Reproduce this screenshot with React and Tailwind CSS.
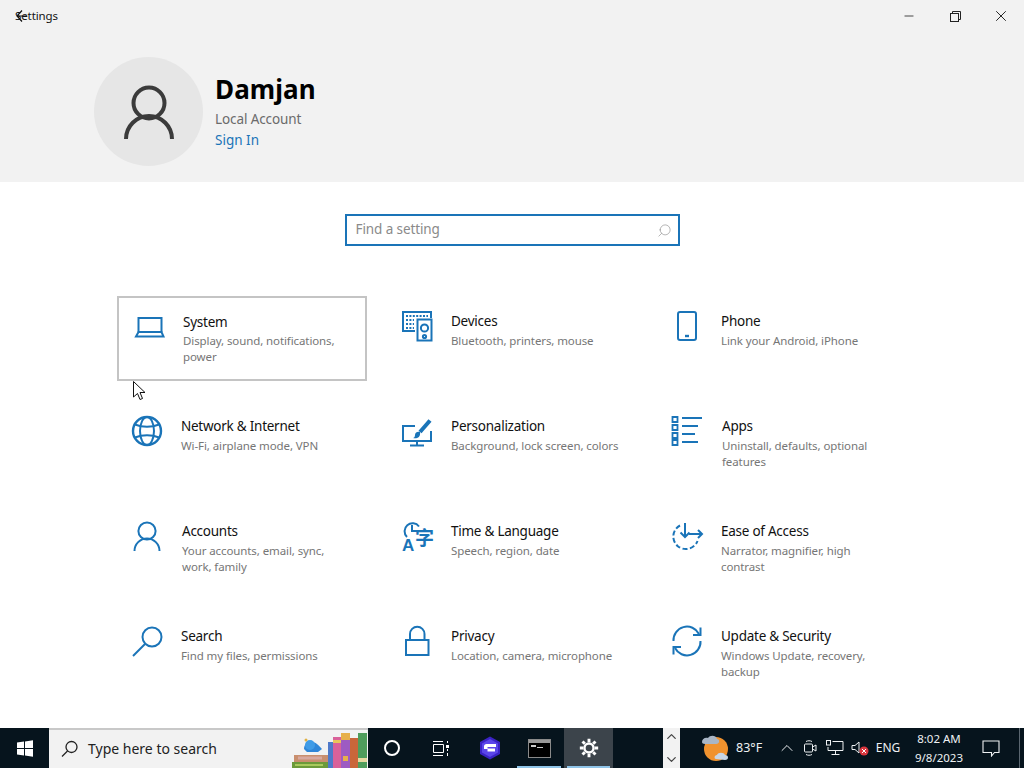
import React from "react";
import { Minus, X, Search as SearchIcon, ChevronUp, ChevronDown } from "lucide-react";

const BLUE = "#1a74b8";

function Ico({ children, className = "" }) {
  return (
    <svg width="32" height="32" viewBox="0 0 32 32" fill="none" stroke={BLUE} strokeWidth="2" className={"shrink-0 overflow-visible " + className}>
      {children}
    </svg>
  );
}

const LaptopIco = () => (
  <Ico>
    <path d="M6.500 21V7h23v14" />
    <path d="M6.500 21h23l2 4.500h-27.500z" />
  </Ico>
);
const GlobeIco = () => (
  <Ico>
    <circle cx="15" cy="15" r="14" strokeWidth="2.400" />
    <ellipse cx="15" cy="15" rx="7" ry="14" />
    <path d="M3 8.500c7 3 17 3 24 0M3 21.500c7-3 17-3 24 0" />
  </Ico>
);
const DevicesIco = () => (
  <Ico>
    <path d="M13 20H1V1h28v6" />
    <path d="M4 5h22M4 9h8M4 13h8M4 17h8" strokeWidth="2" strokeDasharray="2 1.400" />
    <rect x="15.500" y="8.500" width="14" height="21" />
    <circle cx="22.500" cy="17" r="3.600" />
    <circle cx="22.500" cy="25.500" r="1.600" />
  </Ico>
);
const PhoneIco = () => (
  <Ico>
    <rect x="6" y="1" width="18" height="28" rx="2" />
    <path d="M13 25h4" strokeWidth="2.400" />
  </Ico>
);
const BrushIco = () => (
  <Ico>
    <path d="M13 10H1v15h28V15" />
    <path d="M15 25v4M8 29.500h14" />
    <path d="M28 4.500 18 16" strokeWidth="4" />
    <path d="M18 16c-3-1-5 1-5 3s-1 3-2 3c3 1 8 0 7-6z" fill={BLUE} stroke="none" />
  </Ico>
);
const AppsIco = () => (
  <Ico>
    <path d="M.5 1h5v5h-5zM.5 9h5v5h-5zM.5 17h5v5h-5zM.5 24h5v5h-5z" strokeWidth="1.800" />
    <path d="M10 2h20M10 10h16M10 18h13M10 26h16" />
  </Ico>
);
const UserIco = () => (
  <Ico>
    <circle cx="15" cy="10" r="8.600" />
    <path d="M2.500 30a12.500 12.500 0 0 1 25 0" />
  </Ico>
);
const TimeIco = () => (
  <Ico>
    <path d="M5 16A8 8 0 1 1 17 5.500" />
    <path d="M10 4v6h5" />
    <text x="0" y="30" fontSize="17" fontWeight="700" fill={BLUE} stroke="none" fontFamily="'Liberation Sans', sans-serif">A</text>
    <text x="13" y="24" fontSize="19" fontWeight="700" fill={BLUE} stroke="none" fontFamily="'Noto Sans CJK SC', sans-serif">字</text>
  </Ico>
);
const EaseIco = () => (
  <Ico>
    <path d="M8 4.500A12.500 12.500 0 1 0 25.500 20" strokeDasharray="5 2.400" />
    <path d="M13 2v14M8.500 11.500 13 16l4.500-4.500" />
    <path d="M17 13h13M26 9l4 4-4 4" />
  </Ico>
);
const SearchIco = () => (
  <Ico>
    <circle cx="20" cy="11" r="9.500" />
    <path d="M13 18 1 30" />
  </Ico>
);
const LockIco = () => (
  <Ico>
    <rect x="4" y="14" width="22.500" height="15" />
    <path d="M8 14V8a7.200 7.200 0 0 1 14.500 0v6" />
  </Ico>
);
const UpdateIco = () => (
  <Ico>
    <path d="M1.500 15A13.500 13.500 0 0 1 27 8" />
    <path d="M28.500 15A13.500 13.500 0 0 1 3 22" />
    <path d="M28.500 1.500V9h-7.500" />
    <path d="M1.500 28.500V21h7.500" />
  </Ico>
);

const items = [
  { icon: <LaptopIco />, title: "System", desc: "Display, sound, notifications, power", text: "ml-[19px] mt-[1px]", focused: true },
  { icon: <DevicesIco />, title: "Devices", desc: "Bluetooth, printers, mouse", text: "ml-[17px]" },
  { icon: <PhoneIco />, title: "Phone", desc: "Link your Android, iPhone", text: "ml-[17px]" },
  { icon: <GlobeIco />, title: "Network & Internet", desc: "Wi-Fi, airplane mode, VPN", text: "ml-[17px]" },
  { icon: <BrushIco />, title: "Personalization", desc: "Background, lock screen, colors", text: "ml-[17px]" },
  { icon: <AppsIco />, title: "Apps", desc: "Uninstall, defaults, optional features", text: "ml-[18px]" },
  { icon: <UserIco />, title: "Accounts", desc: "Your accounts, email, sync, work, family", text: "ml-[18px]" },
  { icon: <TimeIco />, title: "Time & Language", desc: "Speech, region, date", text: "ml-[17px]" },
  { icon: <EaseIco />, title: "Ease of Access", desc: "Narrator, magnifier, high contrast", text: "ml-[17px]" },
  { icon: <SearchIco />, title: "Search", desc: "Find my files, permissions", text: "ml-[17px]" },
  { icon: <LockIco />, title: "Privacy", desc: "Location, camera, microphone", text: "ml-[17px]" },
  { icon: <UpdateIco />, title: "Update & Security", desc: "Windows Update, recovery, backup", text: "ml-[17px]" },
];

function Tile({ item }) {
  return (
    <div className={"flex h-[85px] border-2 pl-[13px] pt-[13px] " + (item.focused ? "border-[#c4c4c4]" : "border-transparent")}>
      {item.icon}
      <div className={item.text}>
        <div className="text-[13.500px] leading-5 tracking-[-0.25px] text-[#111]">{item.title}</div>
        <div className={"w-[170px] text-[11.500px] leading-4 tracking-[-0.1px] text-[#767676] " + (item.focused ? "mt-[1px]" : "mt-[2px]")}>{item.desc}</div>
      </div>
    </div>
  );
}

function Books() {
  return (
    <svg width="77" height="38" viewBox="0 0 77 38" className="shrink-0">
      <path d="M13 19c0-5 4-8 9-7 4 1 6 4 9 7l-4 3H16z" fill="#2f86d8" />
      <circle cx="19" cy="15" r="5" fill="#3f9be6" />
      <circle cx="15" cy="10" r="1.500" fill="#e0b040" />
      <rect x="3" y="25" width="34" height="7" fill="#c98f6e" />
      <rect x="7" y="26.500" width="24" height="3" fill="#d8a9a0" />
      <rect x="1" y="32" width="36" height="6" fill="#6c9a3a" />
      <rect x="4" y="34" width="28" height="2" fill="#a9c95c" />
      <rect x="37" y="12" width="5" height="26" fill="#4f79c9" />
      <rect x="42" y="7" width="8" height="31" fill="#d9619a" />
      <rect x="42" y="10" width="8" height="3" fill="#e8c65a" />
      <rect x="50" y="3" width="9" height="35" fill="#9d5bc2" />
      <rect x="50" y="3" width="9" height="7" fill="#e7b04a" />
      <rect x="52" y="26" width="5" height="5" fill="#e7b04a" />
      <rect x="59" y="8" width="8" height="30" fill="#c9663a" />
      <rect x="67" y="3" width="9" height="35" fill="#4f9d5c" />
      <rect x="67" y="28" width="9" height="4" fill="#e6d9a0" />
    </svg>
  );
}

function TaskBtn({ children, active, line, className = "" }) {
  return (
    <div className={"relative flex h-10 items-center justify-center " + (active ? "bg-[#3c444b] " : "") + className}>
      {children}
      {line && <div className="absolute bottom-0 left-[3px] right-[3px] h-[2px] bg-[#8fc4e8]" />}
    </div>
  );
}

function Taskbar() {
  return (
    <div className="flex h-10 items-stretch bg-[#06141d] text-[#eef1f3]">
      <div className="flex w-[49px] items-center justify-center">
        <svg width="18" height="17" viewBox="0 0 18 17" fill="#fff">
          <path d="M1 2.600 8 1.600V8H1zM9 1.400 17 .3V8H9zM1 9h7v6.400l-7-1zM9 9h8v7.700l-8-1.100z" />
        </svg>
      </div>
      <div className="flex w-[319px] items-center border-t-2 border-[#c8c8c8] bg-[#f2f2f2] pl-[12px] text-[#222]">
        <svg width="18" height="18" viewBox="0 0 18 18" fill="none" stroke="#222" strokeWidth="1.300" className="shrink-0">
          <circle cx="10.500" cy="7" r="5.500" />
          <path d="M6.500 11 1 16.500" />
        </svg>
        <span className="ml-[9px] -mt-[2px] w-[203px] shrink-0 text-[14px]">Type here to search</span>
        <Books />
      </div>
      <TaskBtn className="w-[48px]">
        <div className="h-[16px] w-[16px] rounded-full border-2 border-white" />
      </TaskBtn>
      <TaskBtn className="w-[49px]">
        <svg width="17" height="15" viewBox="0 0 17 15" fill="none" stroke="#fff" strokeWidth="1">
          <path d="M1 .5h10M1 14.500h10M1.500 3.500h10v8h-10zM15.500 0v2M15.500 12v3M15.500 8v2" />
          <rect x="14" y="4" width="3" height="3" fill="#fff" stroke="none" />
        </svg>
      </TaskBtn>
      <TaskBtn className="w-[49px]">
        <svg width="24" height="24" viewBox="0 0 24 24">
          <path d="M12 .5 22 6v12l-10 5.500L2 18V6z" fill="#3a22c4" />
          <path d="M12 3 20 7.500v9L12 21l-8-4.500v-9z" fill="#5b45ea" />
          <path d="M6 10.500c0-1.500 1-2.500 2.500-2.500H18v3H9.500v1.500H17v3H9.500V13H6z" fill="#fff" />
        </svg>
      </TaskBtn>
      <TaskBtn line className="w-[50px]">
        <div className="h-[19px] w-[23px] border border-[#8a8a8a] bg-black">
          <div className="h-[3px] bg-[#9a9a9a]" />
          <div className="mt-[2px] ml-[2px] flex items-center gap-[1px]">
            <div className="h-[2px] w-[5px] bg-[#ccc]" />
            <div className="mt-[2px] h-[1px] w-[6px] bg-[#ccc]" />
          </div>
        </div>
      </TaskBtn>
      <TaskBtn active line className="w-[49px]">
        <svg width="20" height="20" viewBox="0 0 24 24" fill="none" stroke="#fff" strokeWidth="3">
          <circle cx="12" cy="12" r="5.500" />
          <path d="M12 1v4M12 19v4M1 12h4M19 12h4M4.200 4.200 7 7M17 17l2.800 2.800M4.200 19.800 7 17M17 7l2.800-2.800" strokeWidth="3.500" />
        </svg>
      </TaskBtn>
      <div className="flex-1" />
      <div className="flex w-[17px] flex-col items-center justify-between bg-[#f2f2f2] py-[1px] text-[#444]">
        <ChevronUp size={15} strokeWidth={2} />
        <ChevronDown size={15} strokeWidth={2} />
      </div>
      <div className="ml-[20px] flex w-[30px] items-center">
        <svg width="30" height="28" viewBox="0 0 30 28">
          <circle cx="16" cy="15" r="12" fill="#f0922e" />
          <path d="M2 8c0-3 3-5 6-4 2-3 8-3 9 1 3 0 3 5-1 5H5C3 10 2 9 2 8z" fill="#a9b6c6" />
          <path d="M16 25c-2 0-2-4 1-4 1-3 7-3 8 0 4 0 4 5 0 5z" fill="#c8d6e6" />
        </svg>
      </div>
      <div className="ml-[6px] flex w-[39px] items-center text-[12.500px]">83°F</div>
      <div className="flex w-[23px] items-center justify-center">
        <ChevronUp size={20} strokeWidth={1.200} />
      </div>
      <div className="flex w-[24px] items-center justify-center">
        <svg width="14" height="18" viewBox="0 0 14 18" fill="none" stroke="#eef1f3" strokeWidth="1">
          <rect x="1.500" y="5" width="8" height="8" rx="1" />
          <path d="m9.500 8 3.500-2v6l-3.500-2" />
          <path d="M3 2.500c2-1 4-1 6 0M3 15.500c2 1 4 1 6 0" />
        </svg>
      </div>
      <div className="flex w-[26px] items-center justify-center">
        <svg width="18" height="16" viewBox="0 0 18 16" fill="none" stroke="#eef1f3" strokeWidth="1">
          <path d="M6.500 1.500H17v9H2V7M9.500 10.500v4M5.500 14.500h8" />
          <rect x=".5" y=".5" width="4" height="4.500" />
        </svg>
      </div>
      <div className="flex w-[24px] items-center justify-center">
        <svg width="18" height="16" viewBox="0 0 18 16">
          <path d="M1 5.500h3L8 2v11L4 9.500H1z" fill="none" stroke="#eef1f3" />
          <circle cx="13" cy="11" r="4.500" fill="#d9363e" />
          <path d="m11 9 4 4m0-4-4 4" stroke="#fff" />
        </svg>
      </div>
      <div className="ml-[1px] flex w-[30px] items-center justify-center text-[12px]">ENG</div>
      <div className="ml-[4px] flex w-[64px] flex-col items-center justify-center text-[11.500px] leading-[19px]">
        <span>8:02 AM</span>
        <span>9/8/2023</span>
      </div>
      <div className="ml-[4px] flex w-[32px] items-center justify-center">
        <svg width="18" height="17" viewBox="0 0 18 17" fill="none" stroke="#eef1f3" strokeWidth="1.100">
          <path d="M1 1h16v11.500h-4.500L9.500 16v-3.500H1z" />
        </svg>
      </div>
      <div className="ml-[12px] w-[1px] bg-[#5a6670]" />
      <div className="w-[4px]" />
    </div>
  );
}

export default function App() {
  return (
    <div className="relative flex h-[768px] w-[1024px] flex-col overflow-hidden bg-white font-['Noto_Sans',sans-serif]">
      {/* header */}
      <div className="h-[182px] bg-[#f2f2f2]">
        <div className="flex h-8 items-center justify-between pl-[15px]">
          <span className="text-[11.500px] tracking-[-0.1px] text-[#111]">Settings</span>
          <div className="flex items-center text-[#111]">
            <div className="flex h-8 w-[46px] items-center justify-center"><Minus size={14} strokeWidth={1.300} /></div>
            <div className="flex h-8 w-[46px] items-center justify-center">
              <svg width="11" height="11" viewBox="0 0 11 11" fill="none" stroke="#222" strokeWidth="1">
                <rect x=".5" y="2.500" width="8" height="8" />
                <path d="M2.500 2.500V.5h8v8h-2" />
              </svg>
            </div>
            <div className="flex h-8 w-[46px] items-center justify-center"><X size={18} strokeWidth={1.200} /></div>
          </div>
        </div>
        <div className="flex pl-[94px] pt-[25px]">
          <div className="flex h-[109px] w-[109px] items-center justify-center rounded-full bg-[#e6e6e6]">
            <svg width="50" height="56" viewBox="0 0 50 56" fill="none" stroke="#3b3b3b" strokeWidth="4">
              <circle cx="25" cy="19" r="15.500" />
              <path d="M2 55a23 23 0 0 1 46 0" />
            </svg>
          </div>
          <div className="ml-3 pt-[13px]">
            <div className="text-[26px] font-bold leading-[38px] tracking-[0.1px] text-black">Damjan</div>
            <div className="mt-[1px] text-[13.500px] leading-[20px] tracking-[-0.1px] text-[#6b6b6b]">Local Account</div>
            <div className="mt-[1px] text-[13.500px] leading-[20px] text-[#1a74b8]">Sign In</div>
          </div>
        </div>
      </div>

      {/* search */}
      <div className="flex justify-center pt-[32px]">
        <div className="flex h-[32px] w-[335px] items-center justify-between border-2 border-[#1a74b8] pl-[9px] pr-[6px]">
          <span className="-mt-[1px] text-[13.500px] tracking-[-0.1px] text-[#8a8a8a]">Find a setting</span>
          <SearchIcon size={15} strokeWidth={1} className="-scale-x-100 text-[#8a8a8a]" />
        </div>
      </div>

      {/* tiles */}
      <div className="mx-auto mt-[50px] grid w-[790px] grid-cols-3 gap-x-5 gap-y-5">
        {items.map((it) => (
          <Tile key={it.title} item={it} />
        ))}
      </div>

      <div className="flex-1" />
      <Taskbar />

      {/* back arrow over the title */}
      <svg width="11" height="12" viewBox="0 0 11 12" fill="none" stroke="#111" strokeWidth="1.200" className="absolute left-[16px] top-[10px]">
        <path d="M10.500 6H1M6 .5 1 6l5 5.500" />
      </svg>
      {/* mouse pointer */}
      <svg width="14" height="20" viewBox="0 0 14 20" className="absolute left-[133px] top-[381px]">
        <path d="M.5.500v15.500l4-3.500 2.500 6 2.500-1-2.500-6h5z" fill="#fff" stroke="#111" strokeWidth="1" />
      </svg>
    </div>
  );
}
